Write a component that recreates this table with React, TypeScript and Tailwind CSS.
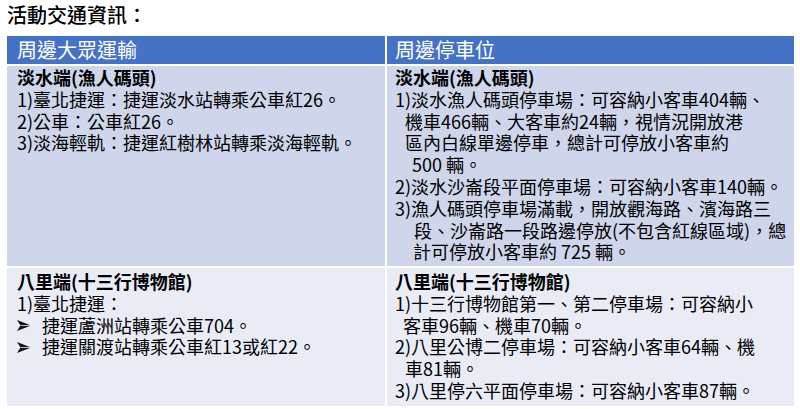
const FONT = "font-['Noto_Sans_CJK_TC','Noto_Sans',sans-serif]";

type Line = { text: string; indent?: number; bold?: boolean; bullet?: boolean };

const tamsuiTransit: Line[] = [
  { text: '淡水端(漁人碼頭)', bold: true },
  { text: '1)臺北捷運：捷運淡水站轉乘公車紅26。' },
  { text: '2)公車：公車紅26。' },
  { text: '3)淡海輕軌：捷運紅樹林站轉乘淡海輕軌。' },
];

const tamsuiParking: Line[] = [
  { text: '淡水端(漁人碼頭)', bold: true },
  { text: '1)淡水漁人碼頭停車場：可容納小客車404輛、' },
  { text: '機車466輛、大客車約24輛，視情況開放港', indent: 10 },
  { text: '區內白線單邊停車，總計可停放小客車約', indent: 10 },
  { text: '500 輛。', indent: 17 },
  { text: '2)淡水沙崙段平面停車場：可容納小客車140輛。' },
  { text: '3)漁人碼頭停車場滿載，開放觀海路、濱海路三' },
  { text: '段、沙崙路一段路邊停放(不包含紅線區域)，總', indent: 19 },
  { text: '計可停放小客車約 725 輛。', indent: 18 },
];

const baliTransit: Line[] = [
  { text: '八里端(十三行博物館)', bold: true },
  { text: '1)臺北捷運：' },
  { text: '捷運蘆洲站轉乘公車704。', bullet: true },
  { text: '捷運關渡站轉乘公車紅13或紅22。', bullet: true },
];

const baliParking: Line[] = [
  { text: '八里端(十三行博物館)', bold: true },
  { text: '1)十三行博物館第一、第二停車場：可容納小' },
  { text: '客車96輛、機車70輛。', indent: 8 },
  { text: '2)八里公博二停車場：可容納小客車64輛、機' },
  { text: '車81輛。', indent: 10 },
  { text: '3)八里停六平面停車場：可容納小客車87輛。' },
];

// wingdings-style arrowhead bullet
function Arrowhead() {
  return (
    <svg width="14" height="11" viewBox="0 0 14 11" className="shrink-0 mr-[11px]">
      <polygon points="0,0 14,5.5 0,11 3.5,5.5" fill="#111" />
      <line x1="3.5" y1="5.5" x2="14" y2="5.5" stroke="#e9ebf5" strokeWidth="0.8" />
    </svg>
  );
}

function Lines({ lines }: { lines: Line[] }) {
  return (
    <>
      {lines.map((l, i) => (
        <div
          key={i}
          className={`flex items-center whitespace-nowrap h-[21.8px] leading-[21.8px] ${l.bold ? 'font-bold' : ''}`}
          style={l.indent ? { paddingLeft: l.indent } : undefined}
        >
          {l.bullet && <Arrowhead />}
          <span>{l.text}</span>
        </div>
      ))}
    </>
  );
}

export default function App() {
  return (
    <div className={`w-[800px] h-[409px] bg-white text-black ${FONT}`}>
      <div className="pl-[7px] pt-[3px] h-[36px] text-[20px] leading-[24px] font-medium">
        活動交通資訊：
      </div>
      <div className="ml-[7px] w-[787px] grid grid-cols-[378px_407px] grid-rows-[28px_200px_138px] gap-[2px] text-[18px]">
        <div className="bg-[#4472c4] text-white text-[20px] leading-[28px] pl-[10px]">周邊大眾運輸</div>
        <div className="bg-[#4472c4] text-white text-[20px] leading-[28px] pl-[8px]">周邊停車位</div>
        <div className="bg-[#cfd5ea] pl-[10px] pt-px">
          <Lines lines={tamsuiTransit} />
        </div>
        <div className="bg-[#cfd5ea] pl-[8px] pt-px">
          <Lines lines={tamsuiParking} />
        </div>
        <div className="bg-[#e9ebf5] pl-[10px] pt-[3px]">
          <Lines lines={baliTransit} />
        </div>
        <div className="bg-[#e9ebf5] pl-[8px] pt-[3px]">
          <Lines lines={baliParking} />
        </div>
      </div>
    </div>
  );
}
